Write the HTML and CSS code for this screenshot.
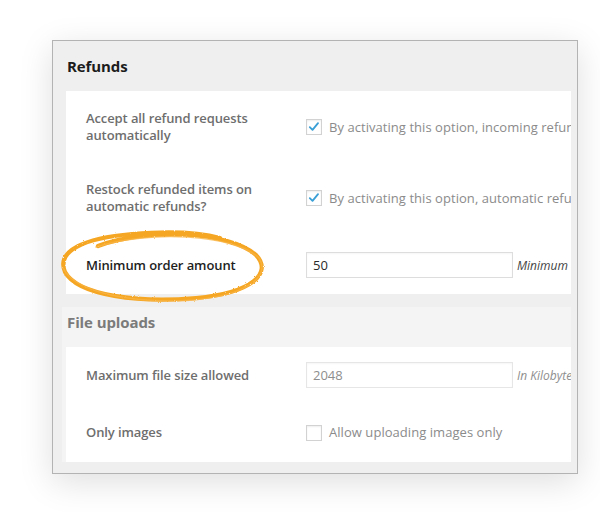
FILE: index.html
```html
<!DOCTYPE html>
<html>
<head>
<meta charset="utf-8">
<link rel="stylesheet" href="styles.css">
</head>
<body>
<div class="window">
  <section class="section section-refunds">
    <h2 class="section-title">Refunds</h2>
    <div class="panel">
      <div class="row row-first">
        <div class="label">Accept all refund requests automatically</div>
        <div class="field">
          <span class="checkbox checked"><svg viewBox="0 0 16 16" width="14" height="14"><path d="M3.2 8.2 L6.3 11.2 L12.6 3.6" fill="none" stroke="#3a9fd6" stroke-width="2.1" stroke-linecap="round" stroke-linejoin="round"/></svg></span>
          <span class="desc">By activating this option, incoming refund requests will be accepted automatically</span>
        </div>
      </div>
      <div class="row row-second">
        <div class="label">Restock refunded items on automatic refunds?</div>
        <div class="field">
          <span class="checkbox checked"><svg viewBox="0 0 16 16" width="14" height="14"><path d="M3.2 8.2 L6.3 11.2 L12.6 3.6" fill="none" stroke="#3a9fd6" stroke-width="2.1" stroke-linecap="round" stroke-linejoin="round"/></svg></span>
          <span class="desc">By activating this option, automatic refunds will restock items</span>
        </div>
      </div>
      <div class="row row-last">
        <div class="label label-strong">Minimum order amount</div>
        <div class="field">
          <span class="input">50</span>
          <span class="hint hint-dark">Minimum order amount for refunds</span>
        </div>
      </div>
    </div>
  </section>
  <section class="section section-files">
    <h2 class="section-title muted">File uploads</h2>
    <div class="panel">
      <div class="row row-file">
        <div class="label">Maximum file size allowed</div>
        <div class="field">
          <span class="input input-muted">2048</span>
          <span class="hint">In Kilobytes</span>
        </div>
      </div>
      <div class="row row-images">
        <div class="label">Only images</div>
        <div class="field">
          <span class="checkbox"></span>
          <span class="desc">Allow uploading images only</span>
        </div>
      </div>
    </div>
  </section>
</div>
<svg class="scribble" width="600" height="512" viewBox="0 0 600 512">
  <defs>
    <filter id="rough" x="-10%" y="-10%" width="120%" height="120%">
      <feTurbulence type="fractalNoise" baseFrequency="0.9" numOctaves="2" seed="3" result="n"/>
      <feDisplacementMap in="SourceGraphic" in2="n" scale="2.2"/>
    </filter>
  </defs>
  <g filter="url(#rough)" fill="none" stroke-linecap="round">
    <path d="M98 246 C146 228 230 231 256 255 C273 273 252 293 196 298 C140 303 78 296 65 272 C56 251 84 238 132 234 C170 231 202 233 220 238" stroke="#f5a623" stroke-width="4.2"/>
    <path d="M96 247 C148 230 234 234 259 258 C271 277 246 295 194 300 C138 304 76 294 63 268" stroke="#f8b445" stroke-width="1.5" opacity="0.75"/>
  </g>
</svg>
</body>
</html>
```

FILE: styles.css
```css
* { box-sizing: border-box; }

html, body {
  margin: 0;
  padding: 0;
  background: #ffffff;
}

body {
  position: relative;
  width: 600px;
  height: 512px;
  overflow: hidden;
  font-family: "Open Sans", "Noto Sans", "DejaVu Sans", sans-serif;
  padding-top: 40px;
  padding-left: 52px;
}

.window {
  width: 526px;
  height: 434px;
  border: 1px solid #b3b3b3;
  background: #efefef;
  box-shadow: 0 8px 32px rgba(0, 0, 0, 0.13);
  padding: 15px 6px 0 9px;
  overflow: hidden;
}

.section {
  padding-left: 4px;
}

.section-files {
  background: #f4f4f4;
  margin-top: 13px;
  padding-top: 5px;
}

.section-title {
  margin: 0 0 15px 1px;
  font-size: 15px;
  line-height: 20px;
  font-weight: 700;
  color: #1c1c1c;
  letter-spacing: -0.1px;
}

.section-title.muted {
  color: #7b7b7b;
}

.panel {
  background: #ffffff;
  overflow: hidden;
  white-space: nowrap;
}

.row {
  display: flex;
  align-items: center;
  padding: 19px 0 18px 20px;
}

.row-last {
  padding-bottom: 16px;
}

.row-file {
  padding: 15px 0 15px 20px;
}

.row-images {
  padding: 19px 0 19px 20px;
}

.label {
  flex: 0 0 220px;
  width: 220px;
  padding-right: 30px;
  white-space: normal;
  font-size: 13px;
  line-height: 17px;
  font-weight: 600;
  color: #6e6e6e;
  letter-spacing: -0.1px;
}

.label-strong {
  color: #1e1e1e;
}

.field {
  display: flex;
  align-items: center;
  flex: 0 0 auto;
}

.checkbox {
  width: 16px;
  height: 16px;
  border: 1px solid #d2d2d2;
  box-shadow: inset 0 1px 2px rgba(0, 0, 0, 0.07);
  background: #fff;
  display: flex;
  align-items: center;
  justify-content: center;
  margin-right: 7px;
  flex: 0 0 16px;
}

.desc {
  font-size: 13px;
  line-height: 21px;
  color: #8b8b8b;
  letter-spacing: 0.05px;
}

.input {
  display: block;
  width: 207px;
  height: 26px;
  border: 1px solid #dddddd;
  box-shadow: inset 0 1px 2px rgba(0, 0, 0, 0.04);
  padding: 0 6px;
  font-size: 13px;
  line-height: 24px;
  color: #2a2a2a;
  margin-right: 4px;
}

.input-muted {
  color: #8e8e8e;
  border-color: #e6e6e6;
}

.hint {
  font-size: 12px;
  font-style: italic;
  color: #8e8e8e;
}

.hint-dark {
  color: #444444;
}

.scribble {
  position: absolute;
  left: 0;
  top: 0;
  pointer-events: none;
}
```
